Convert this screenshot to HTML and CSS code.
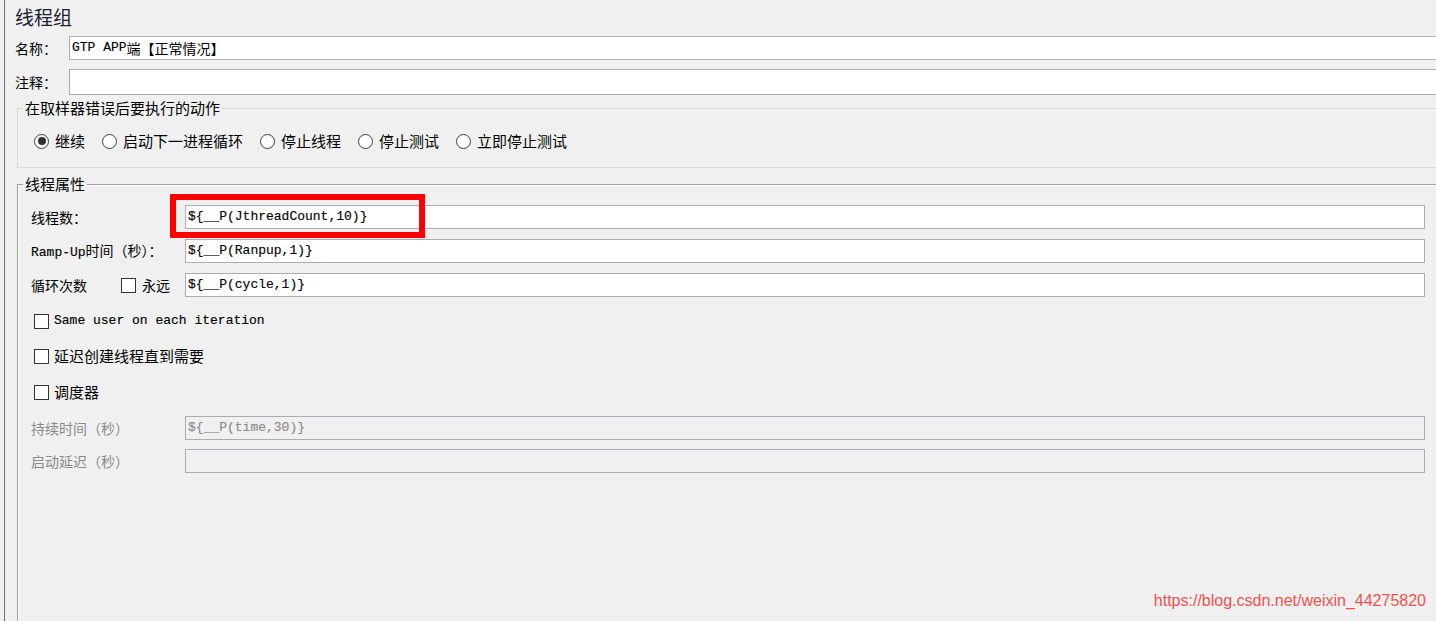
FILE: index.html
```html
<!DOCTYPE html>
<html lang="zh-CN">
<head>
<meta charset="utf-8">
<title>线程组</title>
<link rel="stylesheet" href="styles.css">
</head>
<body>
<div class="panel">
  <h1 class="title">线程组</h1>
  <div class="row row-name">
    <span class="lbl">名称：</span>
    <div class="field"><span class="mono">GTP APP</span><span class="cjk">端【正常情况】</span></div>
  </div>
  <div class="row row-comment">
    <span class="lbl">注释：</span>
    <div class="field field-tall"></div>
  </div>

  <fieldset class="group group-error">
    <legend>在取样器错误后要执行的动作</legend>
    <div class="radios">
      <span class="radio"><span class="dot dot-on"></span>继续</span>
      <span class="radio"><span class="dot"></span>启动下一进程循环</span>
      <span class="radio"><span class="dot"></span>停止线程</span>
      <span class="radio"><span class="dot"></span>停止测试</span>
      <span class="radio"><span class="dot"></span>立即停止测试</span>
    </div>
  </fieldset>

  <fieldset class="group group-thread">
    <legend>线程属性</legend>
    <div class="props">
      <div class="prop">
        <span class="plabel">线程数：</span>
        <div class="field field-hl mono">${__P(JthreadCount,10)}<span class="mark"></span></div>
      </div>
      <div class="prop">
        <span class="plabel"><span class="mono">Ramp-Up</span>时间（秒）：</span>
        <div class="field mono">${__P(Ranpup,1)}</div>
      </div>
      <div class="prop prop-loop">
        <span class="plabel plabel-loop"><span class="loop-text">循环次数</span><span class="box"></span><span class="forever">永远</span></span>
        <div class="field mono">${__P(cycle,1)}</div>
      </div>
      <div class="check check-same"><span class="box"></span><span class="mono">Same user on each iteration</span></div>
      <div class="check check-delay"><span class="box"></span>延迟创建线程直到需要</div>
      <div class="check check-sched"><span class="box"></span>调度器</div>
      <div class="prop prop-duration disabled">
        <span class="plabel">持续时间（秒）</span>
        <div class="field field-off mono">${__P(time,30)}</div>
      </div>
      <div class="prop prop-startup disabled">
        <span class="plabel">启动延迟（秒）</span>
        <div class="field field-off mono"></div>
      </div>
    </div>
  </fieldset>
</div>
<div class="watermark">https://blog.csdn.net/weixin_44275820</div>
</body>
</html>
```

FILE: styles.css
```css
html, body {
  margin: 0;
  padding: 0;
}
body {
  background: #f0f0f0;
  overflow: hidden;
  height: 621px;
  position: relative;
  font-family: "Noto Sans CJK SC", "Noto Sans", sans-serif;
  color: #000;
}
.mono {
  font-family: "Liberation Mono", "Noto Sans CJK SC", monospace;
  font-size: 13px;
  -webkit-text-stroke: 0.15px currentColor;
}
.cjk {
  font-family: "Noto Sans CJK SC", sans-serif;
  font-size: 14px;
}
.panel {
  margin-left: 4px;
  border-left: 1px solid #6e6e6e;
  padding: 5px 0 0 10px;
  height: 616px;
  overflow: hidden;
}
.title {
  margin: 0;
  font-size: 19px;
  font-weight: normal;
  line-height: 24px;
  color: #1c2030;
}
.row {
  display: flex;
  align-items: center;
  margin-right: -40px;
}
.row-name { margin-top: 7px; }
.row-comment { margin-top: 9px; }
.lbl {
  width: 54px;
  font-size: 14px;
  line-height: 20px;
}
.field {
  flex: 1;
  height: 24px;
  box-sizing: border-box;
  border: 1px solid #abadb3;
  background: #fff;
  padding: 0 2px;
  line-height: 22px;
  white-space: nowrap;
  display: flex;
  align-items: center;
}
.field-tall { height: 26px; }
.field-hl { position: relative; }
.mark {
  position: absolute;
  left: -16px;
  top: -12px;
  width: 255px;
  height: 44px;
  box-sizing: border-box;
  border: 6px solid #ff0000;
}
.field-off {
  background: transparent;
  color: #8a8a8a;
}

.group {
  margin: 0;
  min-width: 0;
  padding: 0 0 0 5px;
  border: 1px solid #dadada;
}
.group legend {
  padding: 0 2px;
  font-size: 15px;
  line-height: 20px;
}
.group-error {
  margin: 3px -20px 0 2px;
  padding-top: 13px;
  padding-bottom: 16px;
}
.radios {
  display: flex;
  align-items: center;
  padding-left: 11px;
  font-size: 15px;
  line-height: 20px;
}
.radio {
  display: flex;
  align-items: center;
  margin-right: 17px;
}
.dot {
  width: 15px;
  height: 15px;
  box-sizing: border-box;
  border: 1px solid #3c3c3c;
  border-radius: 50%;
  background: #fff;
  margin-right: 6px;
  display: flex;
  align-items: center;
  justify-content: center;
}
.dot-on::after {
  content: "";
  width: 8px;
  height: 8px;
  border-radius: 50%;
  background: #333;
}

.group-thread {
  margin: 6px -20px 0 2px;
  padding: 11px 30px 0 5px;
  height: 460px;
  border-color: #a0a0a0;
  box-shadow: inset 1px 1px 0 #fff;
}
.props { padding-left: 8px; }
.prop {
  display: flex;
  align-items: center;
  height: 24px;
}
.prop + .prop { margin-top: 10px; }
.prop-duration { margin-top: 14px; }
.prop-startup { margin-top: 9px !important; }
.plabel {
  width: 154px;
  flex: none;
  font-size: 14px;
  line-height: 20px;
  white-space: nowrap;
}
.plabel-loop {
  display: flex;
  align-items: center;
}
.loop-text { width: 90px; }
.forever { margin-left: 6px; }
.box {
  width: 15px;
  height: 15px;
  box-sizing: border-box;
  border: 1px solid #333;
  background: #fff;
  flex: none;
}
.check {
  display: flex;
  align-items: center;
  height: 20px;
  margin-left: 3px;
  font-size: 15px;
  line-height: 20px;
}
.check .box { margin-right: 5px; }
.check-same { margin-top: 14px; }
.check-delay { margin-top: 15px; }
.check-sched { margin-top: 16px; }
.disabled .plabel { color: #8a8a8a; }

.watermark {
  position: absolute;
  right: 10px;
  bottom: 10px;
  font-family: "Liberation Sans", Arial, sans-serif;
  font-size: 16px;
  line-height: 20px;
  color: #f05050;
}
```
